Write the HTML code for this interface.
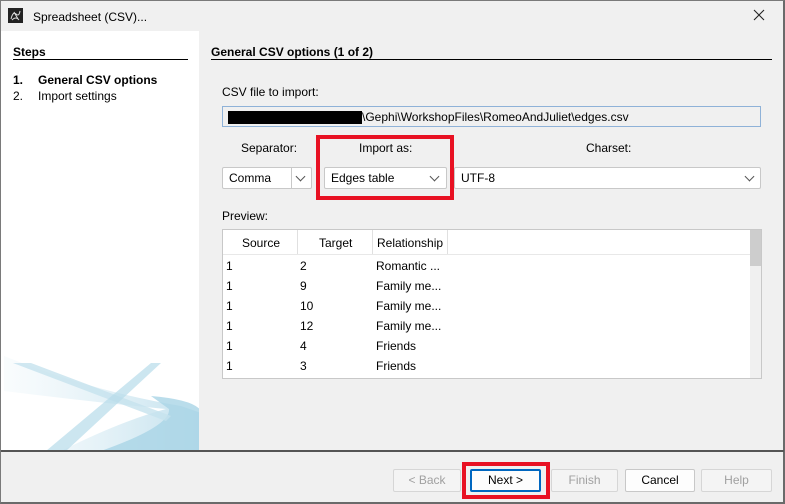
<!DOCTYPE html>
<html><head><style>
*{margin:0;padding:0;box-sizing:border-box}
body{width:785px;height:504px;background:#f0f0f0;font-family:"Liberation Sans",sans-serif;font-size:12px;color:#000;position:relative;overflow:hidden}
.a{position:absolute;white-space:nowrap}
.frame{position:absolute;left:0;top:0;width:785px;height:504px;border:1px solid #7a7a7a;border-bottom:2px solid #6a6a6a;border-right:2px solid #6a6a6a}
.combo{position:absolute;background:#fff;border:1px solid #c8c8c8;border-radius:2px;height:22px;line-height:20px;padding-left:6px}
.chev{position:absolute;top:7px;width:7px;height:7px;border-right:1px solid #555;border-bottom:1px solid #555;transform:rotate(45deg)}
.btn{position:absolute;top:469px;height:23px;border:1px solid #c8c8c8;border-radius:2px;background:#fdfdfd;text-align:center;line-height:21px}
.dis{color:#a0a0a0;background:#f4f4f4;border-color:#d6d6d6}
.red{position:absolute;border:4px solid #e81123}
.row{position:absolute;left:226px}
</style></head><body>
<div class="frame"></div>
<svg class="a" style="left:8px;top:8px" width="15" height="15"><rect width="15" height="15" fill="#222"/><path d="M3 11 Q5 3 8 6 T12 3 M4 12 Q8 8 11 12 M6 4 L10 11" stroke="#ddd" stroke-width="1" fill="none"/></svg>
<div class="a" style="left:33px;top:10px">Spreadsheet (CSV)...</div>
<svg class="a" style="left:753px;top:9px" width="12" height="12"><path d="M1 1L11 11M11 1L1 11" stroke="#222" stroke-width="1.1"/></svg>

<div class="a" style="left:1px;top:31px;width:198px;height:420px;background:#fff;overflow:hidden">
<svg width="198" height="420" style="position:absolute;left:0;top:0">
<defs><linearGradient id="g" x1="0" x2="1"><stop offset="0" stop-color="#d5eaf3" stop-opacity=".2"/><stop offset="1" stop-color="#a9d4e6"/></linearGradient></defs>
<path d="M3 325 Q90 360 180 375 L200 382 L200 420 L60 420 Q120 390 165 378 Q100 372 3 360Z" fill="url(#g)" opacity=".7"/>
<path d="M150 365 Q210 370 200 390 L200 420 L100 420 Q170 395 168 378Z" fill="#a9d4e6" opacity=".8"/>
<path d="M12 332 L30 332 L170 385 L165 390Z" fill="#c5e2ee" opacity=".8"/>
<path d="M45 420 L150 332 L160 332 L65 420Z" fill="#b6dbea" opacity=".7"/>
</svg></div>

<div class="a" style="left:13px;top:45px;font-weight:bold">Steps</div>
<div class="a" style="left:13px;top:59px;width:175px;height:1px;background:#000"></div>
<div class="a" style="left:13px;top:73px;font-weight:bold">1.</div>
<div class="a" style="left:38px;top:73px;font-weight:bold">General CSV options</div>
<div class="a" style="left:13px;top:89px">2.</div>
<div class="a" style="left:38px;top:89px">Import settings</div>

<div class="a" style="left:211px;top:45px;font-weight:bold">General CSV options (1 of 2)</div>
<div class="a" style="left:211px;top:59px;width:561px;height:1px;background:#000"></div>
<div class="a" style="left:222px;top:85px">CSV file to import:</div>
<div class="a" style="left:222px;top:106px;width:539px;height:21px;border:1px solid #8fb2d8;background:#f0f0f0"></div>
<div class="a" style="left:228px;top:111px;width:134px;height:13px;background:#000"></div>
<div class="a" style="left:362px;top:110px">\Gephi\WorkshopFiles\RomeoAndJuliet\edges.csv</div>

<div class="a" style="left:241px;top:141px">Separator:</div>
<div class="a" style="left:359px;top:141px">Import as:</div>
<div class="a" style="left:586px;top:141px">Charset:</div>
<div class="combo" style="left:222px;top:167px;width:90px">Comma<div class="a" style="left:68px;top:0;width:1px;height:20px;background:#c8c8c8"></div><div class="chev" style="left:74px;top:5px"></div></div>
<div class="combo" style="left:324px;top:167px;width:123px">Edges table<div class="chev" style="left:106px;top:5px"></div></div>
<div class="combo" style="left:454px;top:167px;width:307px">UTF-8<div class="chev" style="left:291px;top:5px"></div></div>
<div class="red" style="left:316px;top:135px;width:138px;height:65px"></div>

<div class="a" style="left:222px;top:209px">Preview:</div>
<div class="a" style="left:222px;top:229px;width:540px;height:150px;border:1px solid #c8c8c8;background:#fff"></div>
<div class="a" style="left:750px;top:230px;width:11px;height:148px;background:#f0f0f0"></div>
<div class="a" style="left:750px;top:230px;width:11px;height:36px;background:#cdcdcd"></div>
<div class="a" style="left:297px;top:230px;width:1px;height:24px;background:#e0e0e0"></div>
<div class="a" style="left:372px;top:230px;width:1px;height:24px;background:#e0e0e0"></div>
<div class="a" style="left:447px;top:230px;width:1px;height:24px;background:#e0e0e0"></div>
<div class="a" style="left:223px;top:254px;width:527px;height:1px;background:#e8e8e8"></div>
<div class="a" style="left:242px;top:236px">Source</div>
<div class="a" style="left:319px;top:236px">Target</div>
<div class="a" style="left:377px;top:236px">Relationship</div>
<div class="row" style="top:259px">1</div><div class="a" style="left:300px;top:259px">2</div><div class="a" style="left:376px;top:259px">Romantic ...</div>
<div class="row" style="top:279px">1</div><div class="a" style="left:300px;top:279px">9</div><div class="a" style="left:376px;top:279px">Family me...</div>
<div class="row" style="top:299px">1</div><div class="a" style="left:300px;top:299px">10</div><div class="a" style="left:376px;top:299px">Family me...</div>
<div class="row" style="top:319px">1</div><div class="a" style="left:300px;top:319px">12</div><div class="a" style="left:376px;top:319px">Family me...</div>
<div class="row" style="top:339px">1</div><div class="a" style="left:300px;top:339px">4</div><div class="a" style="left:376px;top:339px">Friends</div>
<div class="row" style="top:359px">1</div><div class="a" style="left:300px;top:359px">3</div><div class="a" style="left:376px;top:359px">Friends</div>

<div class="a" style="left:1px;top:450px;width:783px;height:2px;background:#555"></div>
<div class="btn dis" style="left:393px;width:68px">&lt; Back</div>
<div class="btn" style="left:470px;width:71px;border:2px solid #0067c0;line-height:19px">Next &gt;</div>
<div class="btn dis" style="left:551px;width:67px">Finish</div>
<div class="btn" style="left:625px;width:70px">Cancel</div>
<div class="btn dis" style="left:701px;width:71px">Help</div>
<div class="red" style="left:462px;top:462px;width:88px;height:37px"></div>
</body></html>
